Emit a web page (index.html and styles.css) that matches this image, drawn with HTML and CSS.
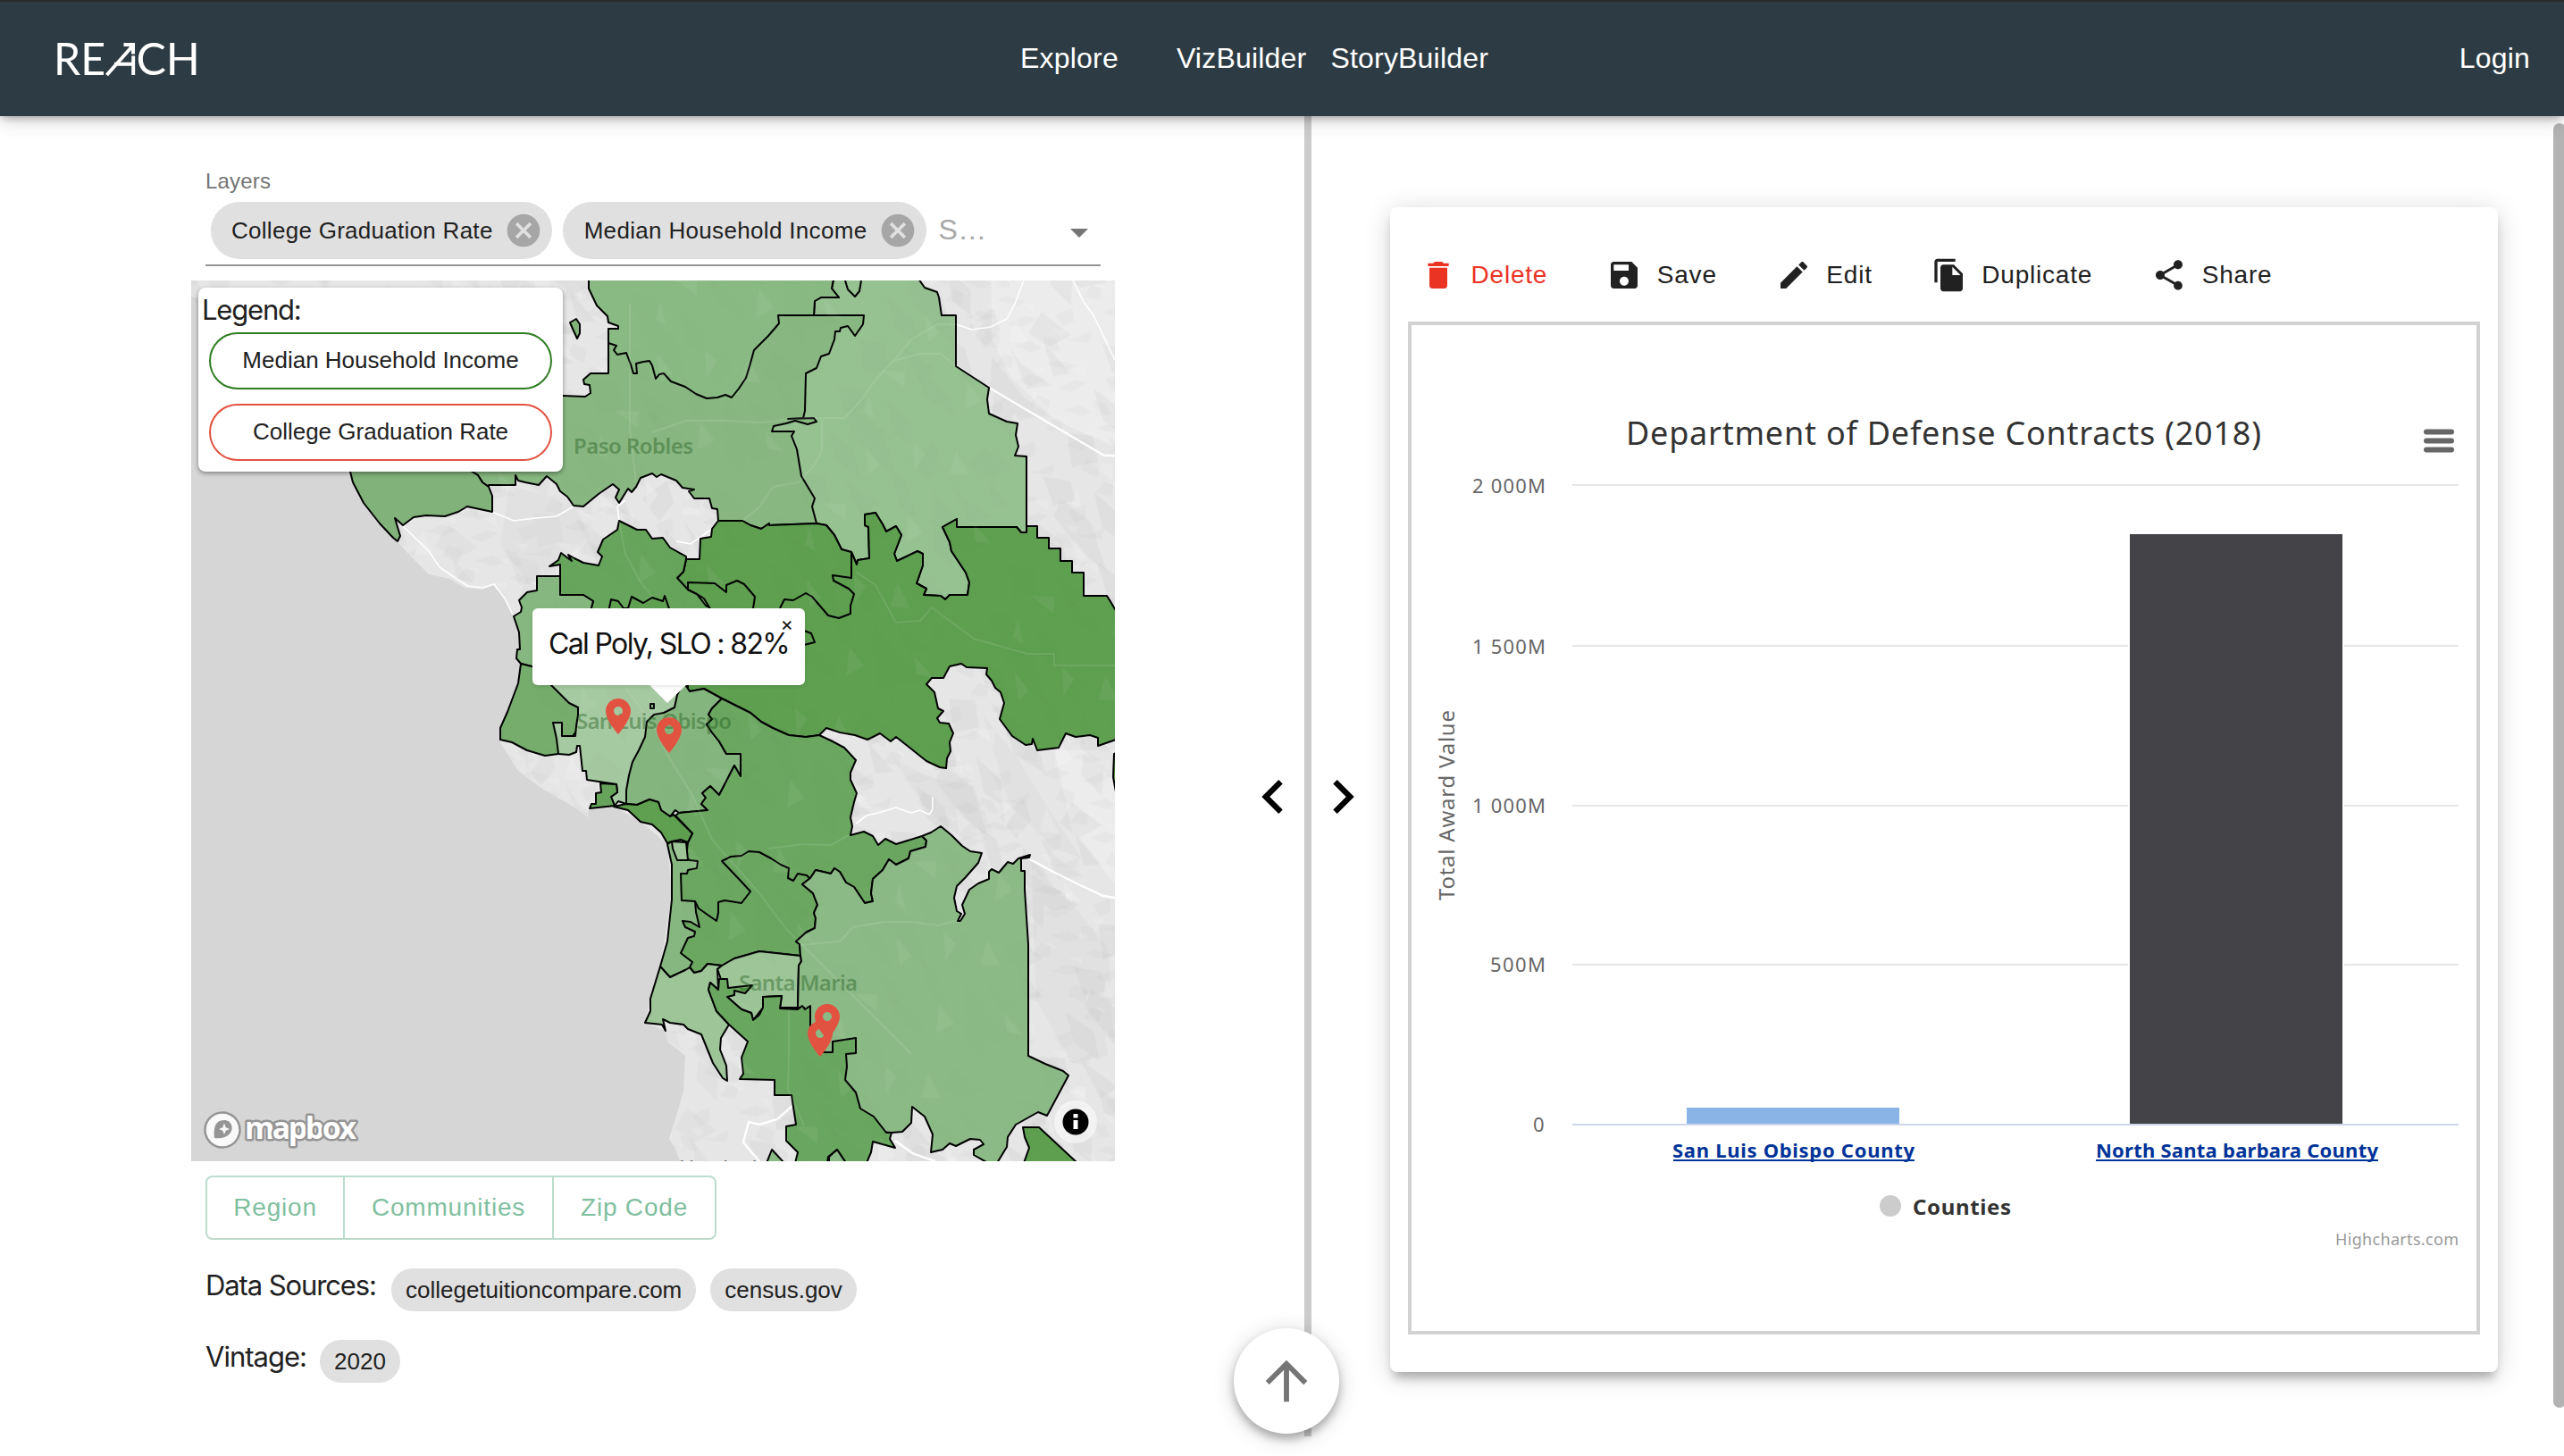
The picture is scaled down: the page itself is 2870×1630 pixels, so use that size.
FILE: index.html
```html
<!DOCTYPE html>
<html lang="en">
<head>
<meta charset="utf-8">
<title>REACH</title>
<link rel="stylesheet" href="styles.css">
</head>
<body>
<header class="topbar">
  <svg class="logo" width="170" height="60" viewBox="0 -8 170 60">
    <text x="0" y="40" textLength="58" lengthAdjust="spacingAndGlyphs">RE</text>
    <path d="M59.500 40L87 9M68 27.800H89M89.200 18.500V40" />
    <path class="logo-tip" d="M78.500 4H91V16.500H87V10L84 8H78.500Z" />
    <text x="92.500" y="40" textLength="71.500" lengthAdjust="spacingAndGlyphs">CH</text>
  </svg>
  <nav class="nav">
    <a class="nav-explore">Explore</a>
    <a class="nav-viz">VizBuilder</a>
    <a>StoryBuilder</a>
  </nav>
  <a class="login">Login</a>
</header>

<main class="split">
  <section class="left">
    <div class="field-label">Layers</div>
    <div class="field">
      <span class="chip layer">College Graduation Rate<svg width="44" height="44" viewBox="0 0 24 24"><path d="M12 2C6.470 2 2 6.470 2 12s4.470 10 10 10 10-4.470 10-10S17.530 2 12 2zm5 13.590L15.590 17 12 13.410 8.410 17 7 15.590 10.590 12 7 8.410 8.410 7 12 10.590 15.590 7 17 8.410 13.410 12 17 15.590z"/></svg></span>
      <span class="chip layer income">Median Household Income<svg width="44" height="44" viewBox="0 0 24 24"><path d="M12 2C6.470 2 2 6.470 2 12s4.470 10 10 10 10-4.470 10-10S17.530 2 12 2zm5 13.590L15.590 17 12 13.410 8.410 17 7 15.590 10.590 12 7 8.410 8.410 7 12 10.590 15.590 7 17 8.410 13.410 12 17 15.590z"/></svg></span>
      <span class="placeholder">S…</span>
      <span class="caret"></span>
    </div>

    <div class="map">
      <svg class="map-canvas" width="1034" height="986" viewBox="214 314 1034 986">
        <defs>
          <pattern id="relief" width="150" height="130" patternUnits="userSpaceOnUse" patternTransform="rotate(24) scale(1.7 1.25)">
            <path fill="#000" fill-opacity=".02" d="M5 10l18-6 8 14-12 12zM40 4l22 10 6 20-14-4zM80 20l10 16-4 20-16-12zM110 6l24 8-10 18-16-4zM12 50l22 6 12 22-20-6zM60 60l14 4 16 26-12-2zM100 46l12 10 24 6-14 12zM8 96l16-8 10 20-14 14zM52 100l26 8 8 14-24-4zM104 92l16 6 6 22-18-10z"/>
            <path fill="#000" fill-opacity=".018" d="M22 22l24 8 22 34-20-6-26-20zM92 60l30 22 20 6-16 14-26-14zM34 84l30 8-8 16zM120 30l24 16-10 8z"/>
            <path fill="#fff" fill-opacity=".13" d="M28 6l10 18-8-2zM68 30l10 4-2 18zM96 20l14 16-12 6zM40 50l14 10-4 12zM84 90l14 10-8 14zM126 74l16 10-10 4zM30 112l14-8 4 14z"/>
          </pattern>
          <pattern id="relief-fine" width="150" height="130" patternUnits="userSpaceOnUse" patternTransform="rotate(-38) scale(.83 .7)">
            <path fill="#000" fill-opacity=".02" d="M5 10l18-6 8 14-12 12zM40 4l22 10 6 20-14-4zM80 20l10 16-4 20-16-12zM110 6l24 8-10 18-16-4zM12 50l22 6 12 22-20-6zM60 60l14 4 16 26-12-2zM100 46l12 10 24 6-14 12zM8 96l16-8 10 20-14 14zM52 100l26 8 8 14-24-4z"/>
            <path fill="#fff" fill-opacity=".12" d="M28 6l10 18-8-2zM68 30l10 4-2 18zM96 20l14 16-12 6zM40 50l14 10-4 12zM84 90l14 10-8 14z"/>
          </pattern>
        </defs>
        <path class="land" d="M214 314H1248V1300H761L757 1289L749 1275L758 1246L765 1221L767 1182L747 1166L745 1154L722 1145L728 1118L739 1082L752 1000L747 945L717 920L687 903L660 903L658 915L640 902L607 883L580 863L560 832L560 815L578 773L583 743L582 715L574 688L563 668L552 655L540 660L520 658L503 648L480 643L457 620L445 606L407 563L390 528L330 450L240 340L214 332Z"/>
        <path fill="#ececec" d="M1110 314H1248V500L1180 470L1130 420L1110 380ZM1180 840H1248V990L1200 930Z"/>
        <path fill="#dedede" opacity=".6" d="M1000 850L1040 870L1090 880L1110 930L1080 940L1040 910ZM1100 800L1140 850L1170 900L1210 960L1180 950L1130 900ZM1155 980L1190 1000L1240 1060L1248 1180L1200 1190L1160 1120ZM570 545L640 560L660 600L620 640L590 650L560 610Z"/>
        <path fill="url(#relief)" d="M214 314H1248V1300H761L749 1275L765 1221L767 1182L747 1166L745 1154H760V900L660 903L658 915L607 883L580 863L560 832L600 700L574 688L552 655L503 648L457 620L390 528L214 332Z"/>
        <path fill="url(#relief-fine)" d="M214 314H1248V1300H761L749 1275L765 1221L767 1182L747 1166L745 1154H760V900L660 903L658 915L607 883L580 863L560 832L600 700L574 688L552 655L503 648L457 620L390 528L214 332Z"/>
        <g class="roads">
          <path d="M451 589L480 617L492 635L523 656L540 658L553 654L565 670L574 688"/>
          <path d="M551 573L575 583L600 580L623 578L642 567M693 583L691 567L700 560M757 606L773 609L797 592"/>
          <path d="M1146 314L1136 340L1127 357L1109 366L1088 369L1070 363M1201 314L1213 338L1224 353L1248 403"/>
          <path class="wide" d="M1070 410L1107 434L1236 510H1248M1151 961L1177 975L1203 988L1235 1003L1248 1005M1002 1277L1023 1292L1047 1300M887 1238L870 1253L850 1259L838 1256L832 1279L850 1300"/>
          <path d="M958 922L970 913L983 910L1003 904L1020 910L1030 907L1040 912L1044 906V892"/>
        </g>
        <g class="zones">
          <path fill="#96c191" d="M933 314L931 323L939 333L919 333L912 337L911 353L860 430L850 480L880 600L914 586L925 588L934 599L942 615L953 618L959 632L960 627L973 625L972 590L968 588V576L980 574L988 587L992 595L1003 589L1009 599L1001 620L1004 628L1027 617L1033 620V633L1026 653L1037 659L1034 666L1053 667L1058 671L1063 666H1083L1085 652L1081 641L1065 617L1063 607L1055 590L1071 581V590H1138L1143 596H1149V511L1136 510L1140 500L1137 487L1139 474L1127 472L1107 463L1105 447L1107 434L1070 410V353H1054L1051 333L1049 327L1035 322L1028 312H933Z"/>
          <path fill="#88b781" d="M527 528L535 532L540 540L547 545V543H577V532L580 538L588 540L603 543L612 533L623 542L627 550L635 556L642 566L653 567L670 553L686 542L693 548L689 557L693 563L703 547L707 551L712 545L717 535L730 530L735 534L740 531L757 538L764 546L777 548L771 550L777 558L794 558L797 569L803 570L804 583H831L840 588L852 592L861 586V588L914 586L909 567L912 558L897 533L892 503L886 488L889 483L864 483L866 477L880 474L890 471L904 475L914 472L911 468L882 469L899 468L901 460L902 418L914 412L919 399L928 396L934 380L935 371H940L941 367L949 365L957 376L966 363L967 353L871 353L780 360L681 380V418H661L653 425L654 430L660 431L661 440L655 444L630 443L560 440L527 500Z"/>
          <path fill="#8aba84" d="M659 312V323L668 342L680 354L681 361L692 365V368H681V384L690 387L687 392L691 397L701 395L706 408L709 418H713L712 407L720 405L727 404L730 409L734 424L738 419L743 418L751 427L767 433L779 441L791 446L803 445L812 442L819 445L827 435L835 423L839 410L844 392L860 376L872 362L871 353H911L912 337L919 333L939 333L931 323L933 312Z"/>
          <path fill="none" d="M946 314L949 324L957 332L962 326L964 314"/>
          <path fill="#80b279" d="M390 520L395 540L407 563L425 586L440 602L445 606L448 600L442 580L451 588L463 579L477 577L498 578L513 573L523 567L551 573V555L547 545L540 540L535 532L527 527L520 500H390Z"/>
          <path fill="#80b279" d="M638 361L645 357L649 363V373L646 379L641 368Z"/>
          <path fill="#5f9f50" d="M804 583L797 592L796 601L784 603L783 626H768L765 640L758 647L740 680L740 760L768 768L772 774L788 771L808 782L840 798L852 808L865 815L883 823L902 825L917 823L925 815L940 820L957 823L971 828L985 821L997 830L1003 825L1017 836L1037 852L1052 859L1059 860L1060 849L1064 841L1063 831L1067 821L1062 810L1052 809L1049 804L1056 796L1050 793L1046 775L1037 766L1043 759L1056 759L1063 746L1076 743L1082 747L1105 748L1104 755L1110 762L1114 770L1120 775L1124 787L1119 805L1133 824L1148 834L1155 833L1156 827L1161 840L1185 837L1193 821L1204 825L1220 823L1229 826V835L1252 827V684L1248 682L1244 675L1239 667H1213V641H1200V628H1187V614H1174V602H1161V589H1149V596H1143L1138 590H1071V581L1055 590L1063 607L1065 617L1081 641L1085 652L1083 666H1063L1058 671L1053 667L1034 666L1037 659L1026 653L1033 633V620L1027 617L1004 628L1001 620L1009 599L1003 589L992 595L988 587L980 574L968 576V588L972 590L973 625L960 627L959 632L953 618L942 615L934 599L925 588L914 586L861 588V586L852 592L840 588L831 583Z"/>
          <path fill="#66a55b" d="M693 583L691 593L675 604L669 618L674 623L670 633L653 630L643 625L636 621L640 628L628 619L625 627L615 634L627 632V666H653L664 673L662 680L690 760H780L795 680L790 678L780 665L770 660L758 647L765 640L768 626L768 623L750 613L742 602L730 603L723 593H713Z"/>
          <path fill="#5f9f50" d="M680 690L684 671L692 673L698 681L703 681L707 668L720 675L730 669L742 673L744 667L752 690Z"/>
          <path fill="#5f9f50" d="M770 652L800 653L813 663L813 655L825 650L833 654L845 668L843 681L846 690H800L788 670L780 665L770 660Z"/>
          <path fill="none" d="M873 681L878 671L888 672L902 664L909 668L927 689L939 692L952 687V678L956 665L950 659L933 650L932 644L953 647V618M900 706L908 709L912 719L900 722"/>
          <path fill="#87b780" d="M583 743L578 737L579 727L582 727L581 708L575 690L583 685L584 680L581 672L590 663L601 661V645H627V666H653L664 673L662 680L640 750L595 746Z"/>
          <path fill="#76ad6d" d="M583 743L580 765L568 797L560 815L560 828L573 831L590 840L610 846L625 844L660 800L650 746H595Z"/>
          <path fill="#a5c9a0" d="M612 762L637 787L647 792V800L645 813L644 824H629V809H619L623 827L625 844L637 845L645 842L646 835H649L652 863H656L657 873L690 878L691 887L684 892L688 902L692 897L701 900L740 860L770 790V760Z"/>
          <path fill="#85b57e" d="M701 900V885L704 868L708 853L715 840L722 825L724 808L732 800L743 798L755 792L758 778L764 765L768 768L772 774L788 771L808 782L797 793L793 800L797 805L791 811L797 820L805 830L813 844H829V869L822 857L805 890L795 880L786 888L790 893L785 900L792 907L760 910L756 907L750 914L740 907L737 898L727 895L713 901Z"/>
          <path fill="#87b780" d="M747 945L752 968V1007L747 1054L739 1082L750 1094L767 1086L780 1083L800 1020L781 972V960L768 943L752 942Z"/>
          <path fill="#6ba761" d="M808 782L840 798L852 808L865 815L883 823L902 825L917 823L930 829L945 837L958 851L952 865V873L959 888L956 898L952 915L954 925L952 935L967 931L977 936L983 946L991 939L1003 945L1032 936L1037 941L1036 948L1019 953L1017 961L1003 968L995 962L988 974L977 984L975 1000L977 1009L968 1011L956 993L947 988L940 976L934 972L930 978L913 974L907 983L898 990L910 1000L915 1013L911 1022L913 1028L912 1039L902 1044L891 1054L895 1057L896 1070L850 1065L822 1073L808 1081L792 1079L785 1087L777 1089L772 1083L775 1077L762 1067L770 1050L777 1048L778 1043L767 1038L764 1031L773 1032L783 1038L779 1021L778 1009L763 1008L762 978L769 978L770 974L780 972L781 964L772 963L768 960L770 943L775 933L756 913L760 910L792 907L785 900L790 893L786 888L795 880L805 890L822 857L829 869V844H813L805 830L797 820L791 811L797 805L793 800L797 793Z"/>
          <path fill="none" d="M778 1009L782 1017L802 1031L804 1022V1010L811 1008L830 1011L840 998L828 985L808 964L818 959L830 958L838 953L850 954L863 961L874 968L883 972L882 983L888 986L893 978L903 980L907 984"/>
          <path fill="#5f9f50" d="M701 900L713 901L727 895L737 898L740 907L750 914L754 912L775 933L770 943L762 940L752 942L747 944L740 932L730 923L717 920L703 907L687 903Z"/>
          <path fill="#9dc598" d="M753 950L758 963H770L768 943L752 942Z"/>
          <path fill="#66a45c" d="M660 905L662 900L667 900V888L673 887L672 877L690 878L691 887L684 892L688 902Z"/>
          <path fill="#9dc598" d="M739 1082L750 1094L767 1086L772 1083L777 1089L785 1087L792 1079L808 1081L803 1085L804 1108L795 1100L793 1108L802 1132L816 1147L807 1162L806 1175L813 1193L814 1210L809 1207L798 1190L785 1158L770 1152L765 1147L750 1145L742 1141L745 1154L741 1147L722 1145L728 1132V1118Z"/>
          <path fill="#9dc598" d="M808 1081L822 1073L850 1065L896 1070L897 1076L894 1081L893 1128H873L875 1115L854 1116V1128L843 1142L841 1134L830 1130L814 1116L803 1085Z"/>
          <path fill="#8cba86" d="M898 990L907 983L913 974L930 978L934 972L940 976L947 988L956 993L968 1011L977 1009L975 1000L977 984L988 974L995 962L1003 968L1017 961L1019 953L1036 948L1037 941L1032 936L1042 932L1053 925L1065 935L1077 947L1086 953L1099 955L1095 966L1080 983L1071 992L1068 1005L1071 1020L1076 1023L1072 1031H1075L1080 1023L1077 1013L1085 996L1095 989L1107 984V976L1110 973L1118 977L1128 965L1134 967L1140 961L1153 957L1152 960L1143 961V975H1147V996L1151 1057V1182L1170 1191L1190 1199L1196 1204L1172 1249L1162 1245L1137 1259L1128 1273L1127 1284L1116 1302H1106L1090 1293V1287L1101 1281L1097 1276L1086 1275L1070 1283L1063 1280L1055 1287L1042 1290L1044 1270L1035 1250L1021 1239L1020 1257L1010 1267L998 1268L900 1260V1128L893 1128L894 1081L897 1076L896 1070L895 1057L891 1054L902 1044L912 1039L913 1028L911 1022L915 1013L910 1000Z"/>
          <path fill="#69a65f" d="M795 1100L804 1108L805 1096H814L815 1106L842 1103L834 1112L822 1109V1114L814 1116L830 1130L841 1134L843 1142L850 1136L854 1128V1116L875 1115L873 1129L893 1130L898 1126L901 1130L907 1126V1150L922 1178H932V1166L958 1162V1179L947 1180L948 1194L946 1209L958 1223L963 1241L978 1250L992 1268H998L996 1275L1002 1285L977 1278L975 1290L970 1302H947L937 1287L927 1295L926 1302H890L893 1290L880 1277V1261L891 1259L886 1226H867V1209L828 1208L832 1202L830 1184L837 1166L816 1147L802 1132L793 1108Z"/>
          <path fill="#5f9f50" d="M1145 1262H1163L1206 1302H1146L1152 1285L1147 1273Z"/>
          <path fill="#8cba86" d="M858 1302L864 1287L878 1302ZM928 1302V1295L937 1287L947 1302Z"/>
          <path fill="#5f9f50" d="M1250 842L1247 844L1246 870L1250 892Z"/>
          <path fill="#85b57e" d="M728 788H732V793H728Z"/>
        </g>
        <g class="green-roads">
          <path d="M730 484L768 471H812L850 473L900 468H945L964 448L980 425L1000 404L1030 396H1053L1070 410M1000 404L1020 380L1050 363L1070 363M920 470V505L912 520L894 540L865 545L850 568L831 583M705 340V480L712 540"/>
          <path d="M693 583L700 620L716 650L730 668M700 770L730 810L750 850L775 890L797 940L850 1000L880 1040L930 1090L960 1120L1000 1160L1020 1180M883 1130V1180L882 1220L900 1260"/>
          <path d="M895 1058L940 1054L955 1038L990 1032L1020 1032L1050 1036L1072 1030M860 950L900 945L930 946L950 935M958 640L980 655L1003 697L1030 695L1043 680L1090 715L1150 732H1180V745H1248"/>
        </g>
        <path fill="url(#relief)" opacity=".4" d="M660 314H1248V1300H820V1080H760V930L600 840L590 760L640 620L700 560L540 540V314Z"/>
        <g class="places">
          <text x="642" y="508" textLength="134">Paso Robles</text>
          <text x="645" y="816" textLength="174">San Luis Obispo</text>
          <text x="827" y="1109" textLength="133">Santa Maria</text>
          <text class="town" x="762" y="1315">Vandenberg</text>
        </g>
        <g fill="#e25241">
          <path id="pin" fill-rule="evenodd" transform="translate(668 778) scale(2)" d="M12 2C8.130 2 5 5.130 5 9c0 5.250 7 13 7 13s7-7.750 7-13c0-3.870-3.130-7-7-7zm0 9.500c-1.380 0-2.500-1.120-2.500-2.500s1.120-2.500 2.500-2.500 2.500 1.120 2.500 2.500-1.120 2.500-2.500 2.500z"/>
          <use href="#pin" x="57" y="21"/>
          <use href="#pin" x="234" y="342"/>
          <use href="#pin" x="226" y="361"/>
        </g>
        <path fill="#fff" d="M726 766L747 787L769 766Z"/>
        <g>
          <circle cx="249" cy="1265" r="19.500" fill="#fafafa" stroke="#959595" stroke-width="2.500"/>
          <path fill="#959595" d="M240 1274C238 1258 244 1254 251 1254C258 1254 261 1261 259 1266C256 1273 249 1275 240 1274Z"/>
          <path fill="#fafafa" d="M251 1257.500L252.800 1262.200L257 1264L252.800 1265.800L251 1270L249.200 1265.800L245 1264L249.200 1262.200Z"/>
          <text class="mapbox" x="274" y="1275" textLength="125">mapbox</text>
        </g>
        <circle cx="1204" cy="1256" r="24" fill="#fff" fill-opacity=".5"/>
        <circle cx="1204" cy="1256" r="14.500"/>
        <path fill="#fff" d="M1201.500 1254h5v10h-5zM1201.500 1247h5v4.500h-5z"/>
      </svg>
      <div class="legend">
        <div class="legend-title">Legend:</div>
        <div class="pill green">Median Household Income</div>
        <div class="pill red">College Graduation Rate</div>
      </div>
      <div class="popup"><span>Cal Poly, SLO : 82%</span><b class="close">×</b></div>
    </div>

    <div class="toggle">
      <span class="t-region">Region</span><span class="t-comm">Communities</span><span class="t-zip">Zip Code</span>
    </div>
    <div class="meta"><span class="meta-label sources">Data Sources:</span><span class="chip small">collegetuitioncompare.com</span><span class="chip small">census.gov</span></div>
    <div class="meta"><span class="meta-label vintage">Vintage:</span><span class="chip small">2020</span></div>
  </section>

  <div class="divider"></div>

  <section class="right">
    <article class="card">
      <div class="tools">
        <span class="tool delete"><svg width="40" height="40" viewBox="0 0 24 24"><path d="M6 19c0 1.100.9 2 2 2h8c1.100 0 2-.9 2-2V7H6v12zM19 4h-3.500l-1-1h-5l-1 1H5v2h14V4z"/></svg>Delete</span>
        <span class="tool"><svg width="40" height="40" viewBox="0 0 24 24"><path d="M17 3H5c-1.110 0-2 .9-2 2v14c0 1.100.89 2 2 2h14c1.100 0 2-.9 2-2V7l-4-4zm-5 16c-1.660 0-3-1.340-3-3s1.340-3 3-3 3 1.340 3 3-1.340 3-3 3zm3-10H5V5h10v4z"/></svg>Save</span>
        <span class="tool"><svg width="40" height="40" viewBox="0 0 24 24"><path d="M3 17.250V21h3.750L17.810 9.940l-3.750-3.750L3 17.250zM20.710 7.040c.39-.39.39-1.020 0-1.410l-2.340-2.340c-.39-.39-1.020-.39-1.410 0l-1.830 1.830 3.750 3.750 1.830-1.830z"/></svg>Edit</span>
        <span class="tool"><svg width="40" height="40" viewBox="0 0 24 24"><path d="M16 1H4c-1.100 0-2 .9-2 2v14h2V3h12V1zm-1 4l6 6v10c0 1.100-.9 2-2 2H7.990C6.890 23 6 22.100 6 21l.01-14c0-1.100.89-2 1.990-2h7zm-1 7h5.500L14 6.500V12z"/></svg>Duplicate</span>
        <span class="tool"><svg width="40" height="40" viewBox="0 0 24 24"><path d="M18 16.080c-.76 0-1.440.3-1.960.77L8.910 12.700c.05-.23.09-.46.09-.7s-.04-.47-.09-.7l7.050-4.110c.54.5 1.250.81 2.040.81 1.660 0 3-1.340 3-3s-1.340-3-3-3-3 1.340-3 3c0 .24.040.47.090.7L8.040 9.810C7.500 9.310 6.790 9 6 9c-1.660 0-3 1.340-3 3s1.340 3 3 3c.79 0 1.500-.31 2.040-.81l7.120 4.160c-.05.21-.08.43-.08.65 0 1.610 1.310 2.920 2.920 2.920s2.920-1.310 2.920-2.920-1.310-2.920-2.920-2.920z"/></svg>Share</span>
      </div>
      <div class="chart">
        <svg width="1192" height="1126" viewBox="1580 364 1192 1126">
          <text class="c-title" x="1820" y="498" textLength="711">Department of Defense Contracts (2018)</text>
          <path stroke="#666" stroke-width="6" stroke-linecap="round" d="M2716 483.500H2744M2716 493.500H2744M2716 503.500H2744"/>
          <path stroke="#e6e6e6" stroke-width="2" d="M1760 543H2752M1760 723H2752M1760 902H2752M1760 1080H2752"/>
          <g class="c-axis">
            <text x="1648" y="552" textLength="82">2 000M</text>
            <text x="1648" y="732" textLength="82">1 500M</text>
            <text x="1648" y="910" textLength="82">1 000M</text>
            <text x="1668" y="1088" textLength="62">500M</text>
            <text x="1716" y="1267">0</text>
          </g>
          <text class="c-y" transform="translate(1628 1008) rotate(-90)" textLength="213">Total Award Value</text>
          <rect x="1888" y="1240" width="238" height="18" fill="#8ab4e6"/>
          <rect x="2382" y="596" width="242" height="662" fill="#fff"/>
          <rect x="2384" y="598" width="238" height="660" fill="#434348"/>
          <path stroke="#ccd6eb" stroke-width="2" d="M1760 1259H2752"/>
          <text class="c-link" x="1872" y="1296" textLength="271">San Luis Obispo County</text>
          <text class="c-link" x="2346" y="1296" textLength="316">North Santa barbara County</text>
          <path stroke="#003399" stroke-width="2" d="M1873 1299H2143M2346 1299H2662"/>
          <circle cx="2116" cy="1350" r="12" fill="#ccc"/>
          <text class="c-legend" x="2141" y="1360" textLength="110">Counties</text>
          <text class="c-credit" x="2614" y="1394" textLength="138">Highcharts.com</text>
        </svg>
      </div>
    </article>
  </section>
</main>

<svg class="arrow arrow-left" width="24" height="38" viewBox="8 6 7.410 12"><path d="M15.410 7.410L14 6l-6 6 6 6 1.410-1.410L10.830 12z"/></svg>
<svg class="arrow arrow-right" width="24" height="38" viewBox="8.590 6 7.410 12"><path d="M8.590 16.590L13.170 12 8.590 7.410 10 6l6 6-6 6z"/></svg>
<div class="fab"><svg width="70" height="70" viewBox="0 0 24 24"><path d="M4 12l1.410 1.410L11 7.830V20h2V7.830l5.580 5.590L20 12l-8-8-8 8z"/></svg></div>
<div class="scroll-thumb"></div>
</body>
</html>
```
FILE: styles.css
```css
* { box-sizing: border-box; }
body {
  margin: 0;
  width: 2870px;
  height: 1630px;
  position: relative;
  overflow: hidden;
  background: #fff;
  color: #212121;
  font-family: "Liberation Sans", Arial, sans-serif;
}

/* header */
.topbar {
  position: relative;
  z-index: 2;
  display: flex;
  align-items: center;
  height: 130px;
  padding: 0 38px 0 60px;
  background: #2d3c44;
  border-top: 2px solid #2a2a2a;
  color: #fff;
  font-size: 32px;
  letter-spacing: .2px;
  box-shadow: 0 4px 8px -2px rgba(0,0,0,.25), 0 4px 20px rgba(0,0,0,.2);
}
.logo { font-family: Lato, sans-serif; font-size: 50px; letter-spacing: 0; fill: #fff; }
.logo path { fill: none; stroke: #fff; stroke-width: 3.9; }
.logo .logo-tip { fill: #fff; stroke: none; }
.nav { display: flex; margin-left: 912px; padding-bottom: 2px; }
.nav-explore { margin-right: 65px; }
.nav-viz { margin-right: 27px; }
.login { margin-left: auto; padding-bottom: 2px; }

/* two panels */
.split { display: flex; height: 1500px; }
.left { width: 1460px; padding: 59px 0 0 230px; }
.divider { width: 8px; height: 1478px; background: #ccc; }
.right { flex: 1; padding: 102px 74px 0 88px; }

/* layer picker */
.field-label { height: 28px; line-height: 28px; font-size: 24px; letter-spacing: .2px; color: #757575; }
.field {
  display: flex;
  align-items: flex-start;
  width: 1002px;
  height: 72px;
  margin-top: 9px;
  padding-left: 6px;
  border-bottom: 2px solid #949494;
}
.chip { display: flex; align-items: center; background: #e0e0e0; font-size: 26px; }
.layer { height: 64px; margin-right: 12px; padding: 0 10px 0 23px; border-radius: 32px; letter-spacing: .28px; }
.income { padding-left: 24px; letter-spacing: .33px; }
.layer svg { margin-left: 12px; fill: #a6a6a6; }
.placeholder { margin-left: 2px; line-height: 62px; font-size: 32px; letter-spacing: .5px; color: #a8a8a8; }
.caret {
  margin: 30px 14px 0 auto;
  border: 10px solid transparent;
  border-top-color: #757575;
  border-bottom: 0;
}

/* map */
.map { position: relative; width: 1034px; height: 986px; margin: 16px 0 0 -16px; background: #d6d6d6; }
.map-canvas { display: block; }
.land { fill: #e6e6e6; }
.roads path { fill: none; stroke: #fff; stroke-width: 1.6; }
.roads .wide { stroke-width: 2.4; }
.zones path { stroke: #000; stroke-width: 2; stroke-linejoin: round; }
.green-roads path { fill: none; stroke: #fff; stroke-opacity: .1; stroke-width: 2; }
.places text { font: 600 24px "Noto Sans", sans-serif; fill: #1e5a1a; fill-opacity: .42; }
.places .town { font-weight: 500; fill: #666; fill-opacity: 1; font-size: 22px; }
.mapbox {
  font: 700 34px "Open Sans", sans-serif;
  fill: #fff;
  stroke: #959595;
  stroke-width: 5;
  stroke-linejoin: round;
  paint-order: stroke;
}
.legend {
  position: absolute;
  left: 8px;
  top: 8px;
  width: 408px;
  height: 206px;
  padding: 4px 12px 0;
  border-radius: 8px;
  background: #fff;
  box-shadow: 0 2px 5px rgba(0,0,0,.4);
}
.legend-title { height: 40px; margin: 0 0 6px -8px; font: 31px/41px Inter, sans-serif; letter-spacing: -1.2px; }
.pill {
  height: 64px;
  margin-bottom: 16px;
  border: 2px solid;
  border-radius: 32px;
  text-align: center;
  font-size: 26px;
  line-height: 59px;
}
.green { border-color: #2f7d22; }
.red { border-color: #e25241; }
.popup {
  position: absolute;
  left: 382px;
  top: 367px;
  width: 305px;
  height: 86px;
  padding-left: 18px;
  border-radius: 6px;
  background: #fff;
  color: #111;
  font: 32px/79px Inter, sans-serif;
  letter-spacing: -1.65px;
  white-space: nowrap;
  box-shadow: 0 2px 4px rgba(0,0,0,.1);
}
.close { position: absolute; right: 13px; top: 3px; font: 22px/28px Inter, sans-serif; letter-spacing: 0; }

/* geography toggle */
.toggle {
  display: flex;
  width: 572px;
  height: 72px;
  margin-top: 16px;
  border: 2px solid #bcdccd;
  border-radius: 8px;
  color: #80bf9f;
  font-size: 28px;
  line-height: 68px;
  letter-spacing: .8px;
  text-align: center;
}
.t-region { width: 154px; border-right: 2px solid #bcdccd; }
.t-comm { width: 234px; border-right: 2px solid #bcdccd; }
.t-zip { flex: 1; }

/* sources */
.meta { display: flex; height: 48px; margin-top: 32px; }
.meta-label { font: 31px/38px Inter, sans-serif; white-space: nowrap; }
.sources { width: 208px; letter-spacing: -1.1px; }
.vintage { width: 128px; letter-spacing: -1px; }
.small { height: 48px; margin-right: 16px; padding: 0 16px; border-radius: 24px; }

/* visualization card */
.card {
  height: 1304px;
  padding: 44px 20px 0;
  border-radius: 8px;
  background: #fff;
  box-shadow: 0 10px 12px -4px rgba(0,0,0,.28), 0 4px 30px rgba(0,0,0,.16);
}
.tools { display: flex; gap: 66px; height: 84px; padding: 12px 0 0 14px; }
.tool { display: flex; align-items: center; gap: 16.5px; height: 40px; font-size: 28px; letter-spacing: .8px; }
.tool svg { fill: #212121; }
.delete { color: #ea3323; }
.delete svg { fill: #ea3323; }
.chart { height: 1134px; border: 4px solid #d2d2d2; }
.chart svg { display: block; }
.chart text { font-family: "Noto Sans", "Open Sans", sans-serif; }
.c-title { font-size: 36px; fill: #333; }
.c-axis text { font-size: 22px; fill: #666; }
.c-y { font-size: 24px; fill: #666; }
.c-link { font-size: 22px; font-weight: 700; fill: #003399; }
.c-legend { font-size: 24px; font-weight: 700; fill: #333; }
.c-credit { font-size: 18px; fill: #999; }

/* overlays */
.arrow { position: absolute; top: 873px; }
.arrow-left { left: 1412px; }
.arrow-right { left: 1492px; }
.fab {
  position: absolute;
  left: 1381px;
  top: 1487px;
  display: flex;
  align-items: center;
  justify-content: center;
  width: 118px;
  height: 118px;
  border-radius: 50%;
  background: #fff;
  box-shadow: 0 6px 10px rgba(0,0,0,.25), 0 4px 24px rgba(0,0,0,.18);
}
.fab svg { fill: #757575; }
.scroll-thumb {
  position: absolute;
  left: 2858px;
  top: 138px;
  width: 14px;
  height: 1438px;
  border-radius: 7px;
  background: #b3b3b3;
}
```
